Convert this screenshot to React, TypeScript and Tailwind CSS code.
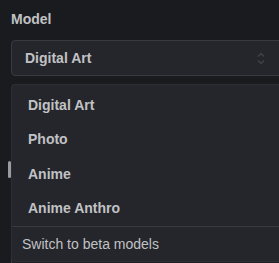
const models = ["Digital Art", "Photo", "Anime", "Anime Anthro"];

export default function App() {
  return (
    <div
      className="relative h-[263px] w-[279px] overflow-hidden bg-[#1a1b1e] text-[#c1c2c5]"
      style={{ fontFamily: '"Liberation Sans", Arial, sans-serif' }}
    >
      <div className="pl-[11px] pt-[9px]">
        <p className="text-[14px] font-bold leading-[20px]">Model</p>
        <div className="mt-[11px] flex h-[36px] w-[290px] items-center rounded-[4px] border border-[#373a40] bg-[#25262b] pl-[13px]">
          <span className="text-[14px] font-bold">Digital Art</span>
          <svg
            className="ml-auto mr-[35px]"
            width="8"
            height="13"
            viewBox="0 0 8 13"
            fill="none"
            stroke="#3f4248"
            strokeWidth="1.5"
          >
            <path d="M1 4.5l3-3 3 3M1 8.5l3 3 3-3" />
          </svg>
        </div>
        <div className="mt-[8px] h-[200px] w-[290px] rounded-[4px] border border-[#373a40] bg-[#1f2023]" />
      </div>

      <div className="absolute left-[8px] top-[161px] h-[17px] w-[3px] rounded-sm bg-[#9a9ca0]" />

      <div className="absolute left-[11px] top-[84px] w-[290px] rounded-[4px] border border-[#2c2e33] bg-[#25262b]">
        <div className="px-[4px] pt-[3px]">
          {models.map((m) => (
            <div
              key={m}
              className="flex h-[34.5px] items-center pl-[12px] text-[14px] font-bold"
            >
              {m}
            </div>
          ))}
        </div>
        <div className="border-t border-[#373a40]" />
        <div className="flex h-[34px] items-center pl-[10px] text-[14px]">
          Switch to beta models
        </div>
      </div>
    </div>
  );
}
